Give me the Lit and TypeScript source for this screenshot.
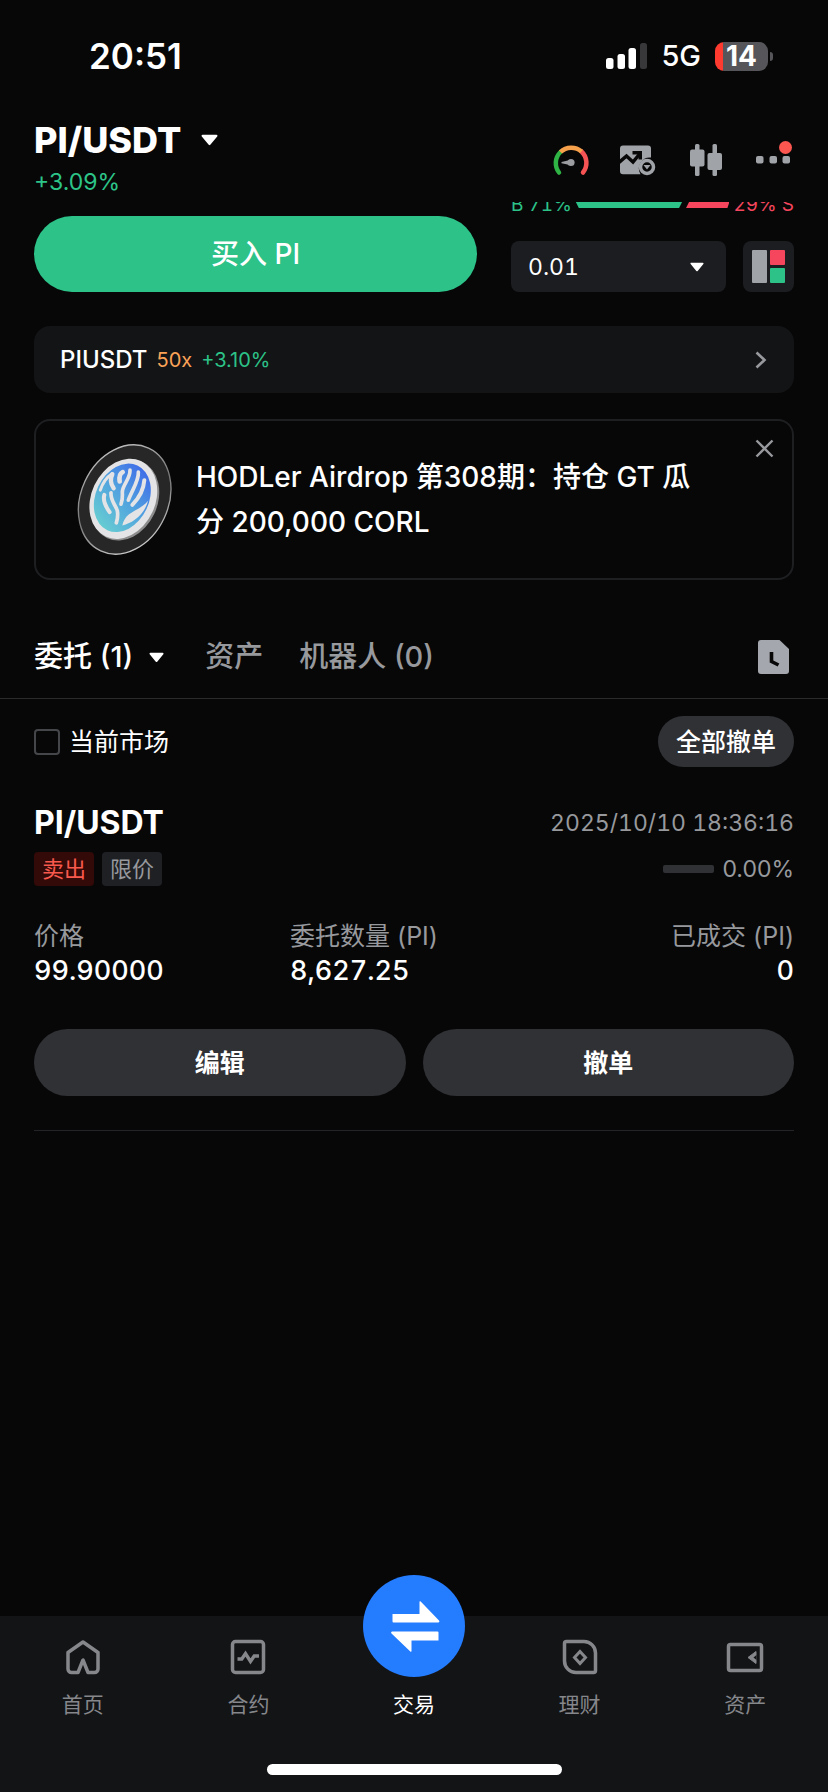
import { LitElement, html, css, svg } from "lit";
import { customElement, state } from "lit/decorators.js";
import { classMap } from "lit/directives/class-map.js";

const caret = () => html`
  <svg class="caret" viewBox="0 0 16 11" aria-hidden="true">
    <path d="M1.5 1.5h13L8 9.3z" fill="#fff" stroke="#fff" stroke-width="2" stroke-linejoin="round" />
  </svg>
`;

const navIcons = {
  home: svg`
    <path d="M22 5 37 15.5V32a3.5 3.5 0 0 1-3.5 3.5H27L22 23l-5 12.500H10.500A3.500 3.500 0 0 1 7 32V15.500z"
      fill="none" stroke="currentColor" stroke-width="3.500" stroke-linejoin="round" />`,
  contract: svg`
    <rect x="6.500" y="4.500" width="31" height="31" rx="3" fill="none" stroke="currentColor" stroke-width="3.500" />
    <path d="M11.500 22h4.300l3.700-5.500 5 8 3.700-5.500h4.800" fill="none" stroke="currentColor" stroke-width="3.400" />`,
  earn: svg`
    <path d="M8.500 4.500H26A11.500 11.500 0 0 1 37.500 16v17.500a2 2 0 0 1-2 2H18A11.500 11.500 0 0 1 6.500 24V6.500a2 2 0 0 1 2-2z"
      fill="none" stroke="currentColor" stroke-width="3.500" />
    <path d="M22 14.500 27.500 20.500 22 26.500 16.500 20.500z" fill="none" stroke="currentColor" stroke-width="3" />`,
  wallet: svg`
    <rect x="5.500" y="7.500" width="33" height="26" rx="2" fill="none" stroke="currentColor" stroke-width="3.500" />
    <path d="M33 14.500v12l-8-6z" fill="currentColor" stroke="currentColor" stroke-width="1" stroke-linejoin="round" />
    <path d="M33.500 18v5l-3-2.500z" fill="#131416" />`,
};

@customElement("status-bar")
class StatusBar extends LitElement {
  static styles = css`
    :host {
      display: flex;
      justify-content: space-between;
      align-items: center;
      height: 112px;
      box-sizing: border-box;
      padding: 0 55px 0 89px;
      color: #fff;
    }
    .time { font-size: 35px; line-height: 44px; font-weight: 600; }
    .right { display: flex; align-items: center; gap: 14px; }
    .signal { width: 41px; height: 26px; }
    .network { font-size: 29px; line-height: 36px; font-weight: 500; }
    .battery { display: flex; align-items: center; gap: 2px; }
    .cell {
      width: 53px;
      height: 29px;
      border-radius: 9px;
      background: linear-gradient(90deg, #ff3b30 8px, #56565a 8px);
      font-size: 28px;
      line-height: 29px;
      font-weight: 700;
      text-align: center;
    }
    .nub { width: 3px; height: 9px; border-radius: 0 3px 3px 0; background: #56565a; }
  `;

  render() {
    return html`
      <span class="time">20:51</span>
      <div class="right">
        <svg class="signal" viewBox="0 0 41 26" aria-hidden="true">
          <rect y="15" width="7.500" height="11" rx="2.500" fill="#fff" />
          <rect x="11.500" y="11" width="7.500" height="15" rx="2.500" fill="#fff" />
          <rect x="22.500" y="5" width="7.500" height="21" rx="2.500" fill="#fff" />
          <rect x="34" width="7" height="26" rx="2.500" fill="#38383a" />
        </svg>
        <span class="network">5G</span>
        <div class="battery"><span class="cell">14</span><span class="nub"></span></div>
      </div>
    `;
  }
}

@customElement("pair-header")
class PairHeader extends LitElement {
  static styles = css`
    :host {
      display: flex;
      justify-content: space-between;
      padding: 6px 34px;
    }
    button { border: 0; padding: 0; background: none; color: inherit; font: inherit; }
    h1 { margin: 0; font-size: 36px; line-height: 44px; font-weight: 800; }
    .pair { display: flex; align-items: center; gap: 20px; }
    .caret { width: 17px; height: 12px; }
    .change { margin: 6px 0 0; font-size: 23px; line-height: 28px; color: #2dc488; }
    .tools { display: flex; align-items: center; gap: 30px; padding-top: 6px; }
    .tool, .tool svg { display: block; width: 38px; height: 38px; }
  `;

  render() {
    return html`
      <div>
        <h1><button class="pair">PI/USDT ${caret()}</button></h1>
        <p class="change">+3.09%</p>
      </div>
      <div class="tools">
        <button class="tool" aria-label="行情强度">
          <svg viewBox="0 0 38 38" fill="none" stroke-width="4.500">
            <path d="M7 31.500A15.500 15.500 0 0 1 8.500 11" stroke="#2fb344" stroke-linecap="round" />
            <path d="M29.500 10.500A15.500 15.500 0 0 1 31 31.500" stroke="#f65454" stroke-linecap="round" />
            <path d="M8.500 11A15.500 15.500 0 0 1 29.500 10.500" stroke="#f7a04b" />
            <circle cx="19" cy="21.500" r="3.600" fill="#9b9da1" />
            <path d="M19 18.700v5.600L9.500 22.300v-1.200z" fill="#9b9da1" />
          </svg>
        </button>
        <button class="tool" aria-label="图表">
          <svg viewBox="2 0 38 38">
            <path fill="#a0a3a7" d="M5 4.500h25a3 3 0 0 1 3 3v9a11 11 0 0 0-10.500 16.700H5a3 3 0 0 1-3-3V7.500a3 3 0 0 1 3-3z" />
            <path d="M1 21.500 8.500 15l6.500 6L22 12.500" fill="none" stroke="#070708" stroke-width="3.500" />
            <path d="M14.500 10h9.500v8.500h-3.500v-5h-6z" fill="#070708" />
            <circle cx="29" cy="26" r="6.500" fill="none" stroke="#a0a3a7" stroke-width="3.500" />
            <path d="M25.500 24h7L29 28.500z" fill="#a0a3a7" />
          </svg>
        </button>
        <button class="tool" aria-label="K线">
          <svg viewBox="1 0 38 38" fill="#a0a3a7">
            <rect x="3" y="8.500" width="14.500" height="17" rx="2" />
            <rect x="8" y="3" width="4.500" height="32" rx="1.500" />
            <rect x="20.500" y="12" width="14.500" height="17" rx="2" />
            <rect x="25.500" y="3" width="4.500" height="32" rx="1.500" />
          </svg>
        </button>
        <button class="tool" aria-label="更多">
          <svg viewBox="0 0 38 38" fill="#a0a3a7">
            <rect x="0" y="15" width="7.500" height="7.500" rx="2" />
            <rect x="13.500" y="15" width="7.500" height="7.500" rx="2" />
            <rect x="26.500" y="15" width="7.500" height="7.500" rx="2" />
            <circle cx="29.500" cy="6.500" r="6.500" fill="#fb5750" />
          </svg>
        </button>
      </div>
    `;
  }
}

@customElement("trade-strip")
class TradeStrip extends LitElement {
  static styles = css`
    :host {
      display: grid;
      grid-template-columns: 443fr 283fr;
      column-gap: 34px;
      align-items: end;
      padding: 0 34px;
    }
    button { border: 0; color: #fff; font: inherit; padding: 0; }
    .buy {
      height: 76px;
      border-radius: 38px;
      background: #2cc288;
      font-size: 28px;
      line-height: 40px;
      font-weight: 500;
    }
    .depth-window { height: 39px; overflow: hidden; }
    .depth {
      display: flex;
      align-items: center;
      gap: 4px;
      margin-top: -9px;
      font-size: 19px;
      line-height: 24px;
      font-feature-settings: "tnum";
    }
    .bids { color: #2cc288; }
    .asks { color: #f6465d; }
    .bar { height: 6px; background: currentColor; }
    .bids.bar { flex: 71 0 0; clip-path: polygon(0 0, 100% 0, calc(100% - 3px) 100%, 3px 100%); }
    .asks.bar { flex: 29 0 0; clip-path: polygon(3px 0, 100% 0, calc(100% - 2px) 100%, 0 100%); }
    .controls { display: flex; gap: 17px; }
    .precision { flex: 1; display: grid; align-items: center; }
    .precision > * { grid-area: 1 / 1; }
    select {
      appearance: none;
      border: 0;
      width: 100%;
      height: 51px;
      padding: 0 17px;
      border-radius: 8px;
      background: #1c1d20;
      color: #fff;
      font: inherit;
      font-size: 23px;
      font-feature-settings: "tnum";
    }
    .caret { width: 14px; height: 10px; justify-self: end; margin-right: 22px; pointer-events: none; }
    .layout {
      display: grid;
      place-items: center;
      width: 51px;
      height: 51px;
      border-radius: 8px;
      background: #1c1d20;
    }
    .layout svg { width: 33px; height: 33px; }
  `;

  render() {
    return html`
      <button class="buy">买入 PI</button>
      <div>
        <div class="depth-window">
          <div class="depth">
            <span class="bids">B 71%</span>
            <span class="bids bar"></span>
            <span class="asks bar"></span>
            <span class="asks">29% S</span>
          </div>
        </div>
        <div class="controls">
          <div class="precision">
            <select aria-label="价格精度"><option>0.01</option><option>0.1</option></select>
            ${caret()}
          </div>
          <button class="layout" aria-label="盘口布局">
            <svg viewBox="0 0 33 33" aria-hidden="true">
              <rect width="15" height="33" rx="1" fill="#a0a3a7" />
              <rect x="18" width="15" height="15" rx="1" fill="#f6465d" />
              <rect x="18" y="18" width="15" height="15" rx="1" fill="#2cc288" />
            </svg>
          </button>
        </div>
      </div>
    `;
  }
}

@customElement("promo-cards")
class PromoCards extends LitElement {
  static styles = css`
    :host { display: block; padding: 34px 34px 0; }
    .futures {
      display: flex;
      align-items: center;
      height: 67px;
      padding: 0 26px;
      border-radius: 16px;
      background: #131416;
      color: inherit;
      text-decoration: none;
      gap: 9px;
      font-size: 20px;
      line-height: 28px;
    }
    .symbol { font-size: 24px; font-weight: 500; color: #fff; }
    .leverage { color: #f9a257; }
    .up { color: #2cc288; }
    .chevron { width: 14px; height: 18px; margin-left: auto; }
    .airdrop {
      display: flex;
      align-items: center;
      gap: 21px;
      margin-top: 26px;
      padding: 18px 15px 18px 39px;
      border: 2px solid #1e1f21;
      border-radius: 16px;
    }
    .coin { flex: none; width: 100px; height: 121px; }
    .text { flex: 1; margin: 0; max-width: 504px; font-size: 28px; line-height: 45px; font-weight: 500; }
    .close { align-self: flex-start; margin: -3px 0 0 auto; border: 0; padding: 3px; background: none; }
    .close svg { display: block; width: 19px; height: 19px; }
  `;

  render() {
    return html`
      <a class="futures" href="#futures">
        <span class="symbol">PIUSDT</span>
        <span class="leverage">50x</span>
        <span class="up">+3.10%</span>
        <svg class="chevron" viewBox="0 0 14 18" aria-hidden="true">
          <path d="M2.500 1.500 10.500 9l-8 7.500" fill="none" stroke="#97999d" stroke-width="2.600" />
        </svg>
      </a>
      <section class="airdrop">
        <svg class="coin" viewBox="0 0 300 360" aria-hidden="true">
          <defs>
            <linearGradient id="sea" gradientUnits="userSpaceOnUse" x1="185" y1="80" x2="105" y2="270">
              <stop offset="0" stop-color="#3f6ee8" />
              <stop offset="0.500" stop-color="#52a4de" />
              <stop offset="1" stop-color="#66cbd2" />
            </linearGradient>
            <linearGradient id="rim" x1="0" y1="0" x2="1" y2="1">
              <stop offset="0" stop-color="#d8d8d8" />
              <stop offset="0.500" stop-color="#777" />
              <stop offset="1" stop-color="#e8e8e8" />
            </linearGradient>
          </defs>
          <ellipse cx="149" cy="180" rx="131" ry="170" transform="rotate(25 149 180)" fill="#272727" stroke="url(#rim)" stroke-width="4" />
          <ellipse cx="150" cy="182" rx="97" ry="126" transform="rotate(25 150 182)" fill="#8d8d8d" />
          <ellipse cx="145" cy="178" rx="96" ry="125" transform="rotate(25 145 178)" fill="#e4e4e6" />
          <ellipse cx="142" cy="175" rx="80" ry="107" transform="rotate(25 142 175)" fill="url(#sea)" />
          <g fill="none" stroke="#e4e4e6" stroke-linecap="round" stroke-linejoin="round">
            <path d="M112 102C94 114 82 132 76 152" stroke-width="9" />
            <path d="M112 104C104 120 106 132 116 146" stroke-width="13" />
            <path d="M143 98C134 102 132 110 134 126" stroke-width="14" />
            <path d="M165 92C166 118 144 134 142 156 142 172 144 178 138 194" stroke-width="11" />
            <path d="M190 98C192 124 172 150 160 182" stroke-width="11" />
            <path d="M208 122C206 150 194 174 172 196" stroke-width="12" />
            <path d="M88 166C82 186 94 204 104 218" stroke-width="12" />
            <path d="M108 160C106 184 122 196 127 214 129 226 128 238 124 250" stroke-width="11" />
          </g>
          <path d="M219 184C206 202 180 212 162 224 150 234 144 246 142 258 176 250 210 222 219 184z" fill="#e4e4e6" />
        </svg>
        <p class="text">HODLer Airdrop 第308期：持仓 GT 瓜分 200,000 CORL</p>
        <button class="close" aria-label="关闭">
          <svg viewBox="0 0 19 19"><path d="M1.500 1.500l16 16m0-16-16 16" stroke="#97999d" stroke-width="2.400" /></svg>
        </button>
      </section>
    `;
  }
}

@customElement("order-panel")
class OrderPanel extends LitElement {
  static styles = css`
    :host { display: block; }
    button { border: 0; padding: 0; background: none; color: inherit; font: inherit; }
    .tabs {
      display: flex;
      align-items: center;
      padding: 57px 39px 21px 34px;
      border-bottom: 1px solid #2a2b2d;
      font-size: 29px;
      line-height: 40px;
      font-weight: 500;
      color: #97999d;
    }
    .tab { display: flex; align-items: center; gap: 16px; margin-right: 36px; white-space: nowrap; }
    .tab.active { color: #fff; margin-right: 41px; }
    .caret { width: 15px; height: 11px; }
    .history { margin-left: auto; }
    .history svg { display: block; width: 31px; height: 34px; }
    .body { padding: 17px 34px 0; }
    .row { display: flex; align-items: center; justify-content: space-between; }
    .market { display: flex; align-items: center; gap: 9px; font-size: 25px; line-height: 36px; }
    input {
      appearance: none;
      width: 26px;
      height: 26px;
      margin: 0;
      border: 2px solid #45464a;
      border-radius: 4px;
    }
    .pill { background: #303135; color: #fff; font-weight: 500; font-size: 25px; line-height: 36px; }
    .cancel-all { height: 51px; padding: 0 18px; border-radius: 26px; }
    .head { margin-top: 36px; }
    h2 { margin: 0; font-size: 32px; line-height: 40px; font-weight: 700; }
    .muted { color: #97999d; font-size: 23px; line-height: 34px; }
    time { font-feature-settings: "tnum"; }
    .meta { margin-top: 9px; }
    .tags { display: flex; gap: 8px; font-size: 22px; line-height: 34px; }
    .tag { padding: 0 8px; border-radius: 4px; background: #1e2024; color: #97999d; }
    .tag.sell { background: #330a08; color: #f9584d; }
    .fill { display: flex; align-items: center; gap: 8px; }
    .track { width: 51px; height: 8px; border-radius: 2px; background: #303135; }
    dl {
      display: grid;
      grid-template-columns: repeat(3, 1fr);
      gap: 8px;
      margin: 32px 0 0;
      font-size: 27px;
      line-height: 34px;
      font-weight: 500;
    }
    dl > :last-child { text-align: right; }
    dt { font-size: 25px; line-height: 36px; font-weight: 400; color: #97999d; }
    dd { margin: 0; font-feature-settings: "tnum"; }
    .actions { display: grid; grid-template-columns: 1fr 1fr; gap: 17px; padding: 41px 0 34px; border-bottom: 1px solid #232427; }
    .action { height: 67px; border-radius: 34px; font-weight: 700; }
  `;

  @state() private tab = 0;

  private tabs = ["委托 (1)", "资产", "机器人 (0)"];

  render() {
    return html`
      <nav class="tabs">
        ${this.tabs.map(
          (label, i) => html`
            <button class=${classMap({ tab: true, active: this.tab === i })} @click=${() => (this.tab = i)}>
              ${label}${i === 0 ? caret() : ""}
            </button>
          `
        )}
        <button class="history" aria-label="历史委托">
          <svg viewBox="0 0 31 34">
            <path d="M3 0h18.500L31 9v22a3 3 0 0 1-3 3H3a3 3 0 0 1-3-3V3a3 3 0 0 1 3-3z" fill="#a4a7ad" />
            <path d="M13.500 12v9.500l7 3.500" fill="none" stroke="#070708" stroke-width="3.600" />
          </svg>
        </button>
      </nav>
      <div class="body">
        <div class="row">
          <label class="market"><input type="checkbox" />当前市场</label>
          <button class="pill cancel-all">全部撤单</button>
        </div>
        <article>
          <div class="row head">
            <h2>PI/USDT</h2>
            <time class="muted">2025/10/10 18:36:16</time>
          </div>
          <div class="row meta">
            <div class="tags"><span class="tag sell">卖出</span><span class="tag">限价</span></div>
            <div class="fill"><span class="track"></span><span class="muted">0.00%</span></div>
          </div>
          <dl>
            <div><dt>价格</dt><dd>99.90000</dd></div>
            <div><dt>委托数量 (PI)</dt><dd>8,627.25</dd></div>
            <div><dt>已成交 (PI)</dt><dd>0</dd></div>
          </dl>
          <div class="actions">
            <button class="pill action">编辑</button>
            <button class="pill action">撤单</button>
          </div>
        </article>
      </div>
    `;
  }
}

@customElement("bottom-nav")
class BottomNav extends LitElement {
  static styles = css`
    :host { display: block; margin-top: auto; background: #131416; }
    nav { display: grid; grid-template-columns: repeat(5, 1fr); grid-template-rows: 148px; }
    a {
      display: flex;
      flex-direction: column;
      align-items: center;
      justify-content: flex-end;
      box-sizing: border-box;
      height: 148px;
      padding-bottom: 43px;
      gap: 12px;
      color: #85878b;
      font-size: 21px;
      line-height: 32px;
      text-decoration: none;
    }
    .icon { width: 44px; height: 40px; }
    .active { color: #fff; }
    .trade { flex: none; width: 102px; height: 102px; }
    .home-bar { width: 36%; max-width: 295px; height: 11px; margin: 0 auto 17px; border-radius: 6px; background: #fff; }
  `;

  private item(icon: keyof typeof navIcons, label: string) {
    return html`
      <a href="#${icon}">
        <svg class="icon" viewBox="0 0 44 40" aria-hidden="true">${navIcons[icon]}</svg>
        <span>${label}</span>
      </a>
    `;
  }

  render() {
    return html`
      <nav>
        ${this.item("home", "首页")} ${this.item("contract", "合约")}
        <a class="active" href="#trade">
          <svg class="trade" viewBox="0 0 102 102" aria-hidden="true">
            <circle cx="51" cy="51" r="51" fill="#247cff" />
            <path d="M29.500 39H56.500V27a.700.700 0 0 1 1.200-.500L76 45.500c.800.800.400 2-.800 2H30.500a1 1 0 0 1-1-1z" fill="#fff" />
            <path d="M75.500 65.500H48.500V76a.700.700 0 0 1-1.200.500L28.500 58.500c-.800-.800-.400-2 .800-2H74.500a1 1 0 0 1 1 1z" fill="#fff" />
          </svg>
          <span>交易</span>
        </a>
        ${this.item("earn", "理财")} ${this.item("wallet", "资产")}
      </nav>
      <div class="home-bar"></div>
    `;
  }
}

@customElement("app-root")
class AppRoot extends LitElement {
  static styles = css`
    :host {
      display: flex;
      flex-direction: column;
      min-height: 100vh;
      background: #070708;
      color: #fff;
      font-family: Inter, "Noto Sans CJK SC", sans-serif;
    }
  `;

  render() {
    return html`
      <status-bar></status-bar>
      <pair-header></pair-header>
      <trade-strip></trade-strip>
      <promo-cards></promo-cards>
      <order-panel></order-panel>
      <bottom-nav></bottom-nav>
    `;
  }
}
